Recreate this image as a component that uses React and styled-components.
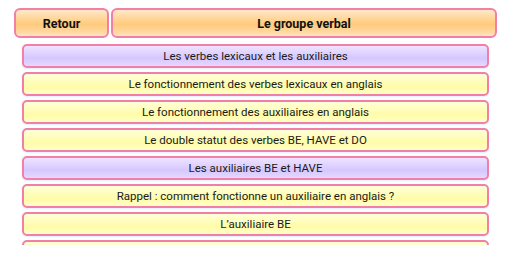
import React from "react";
import styled, { createGlobalStyle } from "styled-components";

const Global = createGlobalStyle`
  html, body { margin: 0; padding: 0; background: #ffffff; }
  body { font-family: Roboto, "Noto Sans", "Liberation Sans", sans-serif; }
`;

const Page = styled.div`
  width: 512px;
  height: 256px;
  overflow: hidden;
  background: #ffffff;
  box-sizing: border-box;
  padding-top: 8px;
`;

const Header = styled.div`
  display: flex;
  gap: 2px;
  padding: 0 15px 0 14px;
  height: 30px;
`;

const HeaderBox = styled.div`
  box-sizing: border-box;
  flex: ${(p) => (p.$grow ? "1 1 auto" : "0 0 95px")};
  height: 30px;
  border: 2px solid #f27fa8;
  border-radius: 6px;
  background: linear-gradient(to bottom, #ffe8c8 0%, #ffd89e 30%, #ffca7c 55%, #ffd8a2 85%, #ffe6c0 100%);
  display: flex;
  align-items: center;
  justify-content: center;
  font-weight: 700;
  font-size: 12.5px;
  color: #111;
`;

const List = styled.div`
  margin-top: 6px;
  padding: 0 23px 0 22px;
  height: 201px;
  overflow: hidden;
  display: flex;
  flex-direction: column;
  gap: 4px;
`;

const Item = styled.div`
  box-sizing: border-box;
  flex: 0 0 24px;
  height: 24px;
  border: 2px solid #f27fa8;
  border-radius: 5px;
  background: ${(p) =>
    p.$tone === "purple"
      ? "linear-gradient(to bottom, #eee4ff 0%, #ddceff 45%, #d6c6ff 60%, #e4d8ff 100%)"
      : "linear-gradient(to bottom, #ffffd8 0%, #fffdb6 45%, #fffba8 60%, #ffffc6 100%)"};
  display: flex;
  align-items: center;
  justify-content: center;
  font-size: 11.5px;
  color: #1a1a1a;
  white-space: nowrap;
  box-shadow: 0 1px 2px rgba(170, 200, 255, 0.35);
`;

const items = [
  { t: "Les verbes lexicaux et les auxiliaires", tone: "purple" },
  { t: "Le fonctionnement des verbes lexicaux en anglais", tone: "yellow" },
  { t: "Le fonctionnement des auxiliaires en anglais", tone: "yellow" },
  { t: "Le double statut des verbes BE, HAVE et DO", tone: "yellow" },
  { t: "Les auxiliaires BE et HAVE", tone: "purple" },
  { t: "Rappel : comment fonctionne un auxiliaire en anglais ?", tone: "yellow" },
  { t: "L’auxiliaire BE", tone: "yellow" },
  { t: "L’auxiliaire HAVE", tone: "yellow" },
];

export default function App() {
  return (
    <>
      <Global />
      <Page>
        <Header>
          <HeaderBox>Retour</HeaderBox>
          <HeaderBox $grow>Le groupe verbal</HeaderBox>
        </Header>
        <List>
          {items.map((it, i) => (
            <Item key={i} $tone={it.tone}>
              {it.t}
            </Item>
          ))}
        </List>
      </Page>
    </>
  );
}
